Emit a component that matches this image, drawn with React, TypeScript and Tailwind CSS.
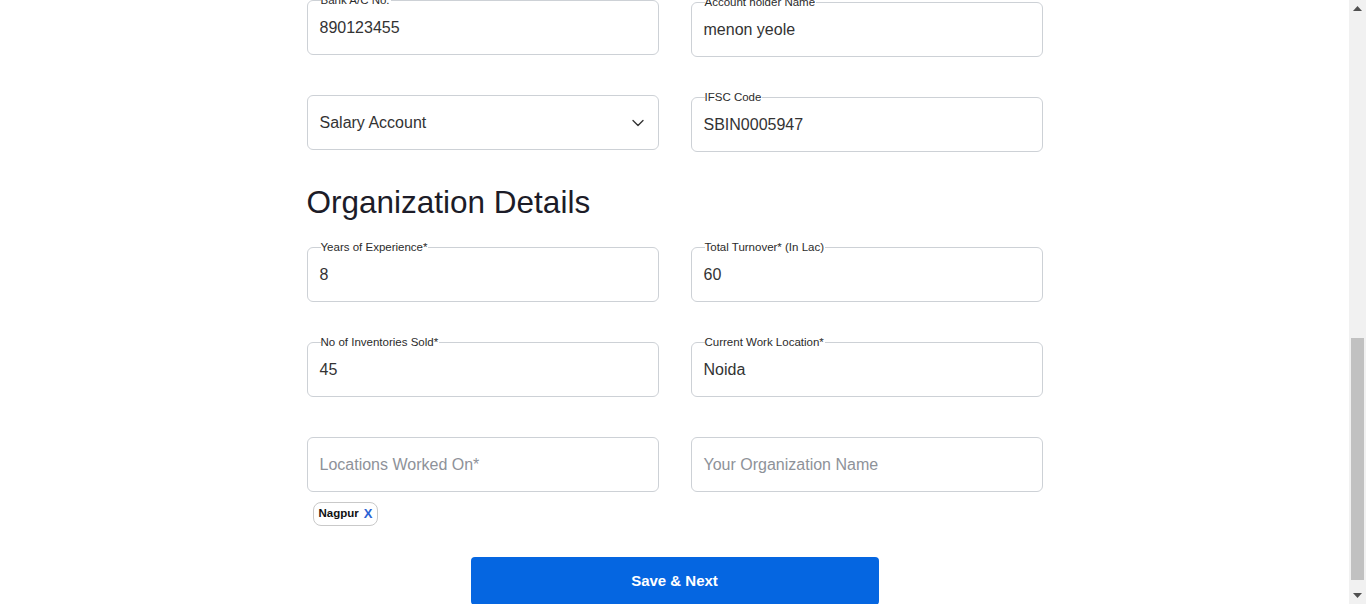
import React from "react";

type FieldProps = {
  label?: string;
  value?: string;
  placeholder?: string;
  select?: boolean;
  className?: string;
};

function Field({ label, value, placeholder, select, className = "" }: FieldProps) {
  return (
    <div
      className={`relative flex h-[55px] items-center justify-between rounded-[6px] border border-[#cdd1d6] bg-white pl-[12px] pr-[10px] ${className}`}
    >
      {label && (
        <span className="absolute left-[13px] top-[-8px] bg-white pr-[1px] text-[11.5px] leading-[14px] text-[#2b2b2b]">
          {label}
        </span>
      )}
      {value ? (
        <span className="text-[16px] text-[#333333]">{value}</span>
      ) : (
        <span className="text-[16px] text-[#8e9299]">{placeholder}</span>
      )}
      {select && (
        <svg width="20" height="20" viewBox="0 0 24 24" fill="none" stroke="#333" strokeWidth="1.6" strokeLinecap="round" strokeLinejoin="round">
          <path d="M6 9l6 6 6-6" />
        </svg>
      )}
    </div>
  );
}

export default function App() {
  return (
    <div className="flex h-[604px] w-full overflow-hidden bg-white font-['Liberation_Sans',Arial,sans-serif]">
      <main className="flex flex-1 justify-center">
        <div className="flex w-[736px] flex-col">
          <div className="grid grid-cols-2 gap-x-8 gap-y-[38px]">
            <Field label="Bank A/C No." value="890123455" />
            <Field label="Account holder Name" value="menon yeole" className="mt-[2px]" />
            <Field value="Salary Account" select />
            <Field label="IFSC Code" value="SBIN0005947" className="mt-[2px]" />
          </div>

          <h2 className="mt-[32px] text-[31.5px] leading-[36px] text-[#1c1c28]">Organization Details</h2>

          <div className="mt-[27px] grid grid-cols-2 gap-x-8 gap-y-10">
            <Field label="Years of Experience*" value="8" />
            <Field label="Total Turnover* (In Lac)" value="60" />
            <Field label="No of Inventories Sold*" value="45" />
            <Field label="Current Work Location*" value="Noida" />
            <div className="flex flex-col">
              <Field placeholder="Locations Worked On*" />
              <div className="mt-[10px] ml-[6px] flex">
                <span className="flex h-[24px] items-center gap-[5px] rounded-[8px] border border-[#c9c9c9] px-[5px] text-[11.5px] font-semibold text-[#111]">
                  Nagpur
                  <span className="text-[13px] font-bold text-[#2a63d4]">X</span>
                </span>
              </div>
            </div>
            <Field placeholder="Your Organization Name" />
          </div>

          <div className="mt-[31px] flex justify-center">
            <button className="h-[48px] w-[408px] rounded-[4px] bg-[#0566e1] text-[15px] font-bold text-white">
              Save &amp; Next
            </button>
          </div>
        </div>
      </main>

      <div className="flex w-[17px] flex-col items-center bg-[#f1f1f1]">
        <div className="flex h-[17px] items-center justify-center">
          <svg width="9" height="5" viewBox="0 0 9 5">
            <path d="M4.5 0L9 5H0z" fill="#505050" />
          </svg>
        </div>
        <div className="flex-1 w-full flex flex-col px-[2px]">
          <div className="h-[321px]" />
          <div className="h-[242px] w-full bg-[#c1c1c1]" />
        </div>
        <div className="flex h-[17px] items-center justify-center">
          <svg width="9" height="5" viewBox="0 0 9 5">
            <path d="M0 0H9L4.5 5z" fill="#505050" />
          </svg>
        </div>
      </div>
    </div>
  );
}
